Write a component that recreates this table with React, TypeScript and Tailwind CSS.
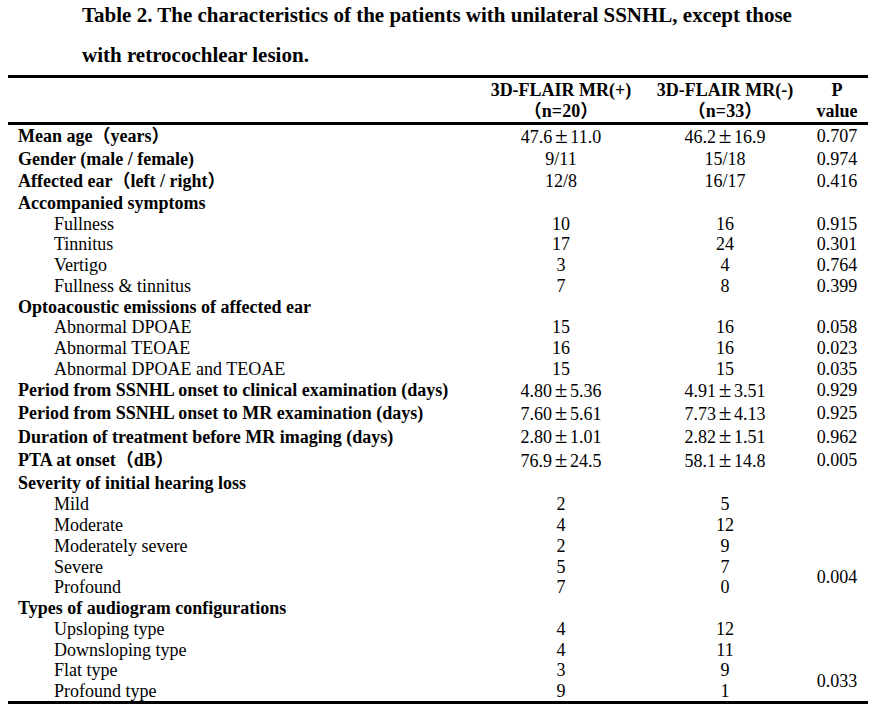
type Row = {
  label: string;
  bold?: boolean;
  a?: string;
  b?: string;
  p?: string;
  span?: number;
  skipP?: boolean;
  h: string;
};

const rows: Row[] = [
  { label: "Mean age（years）", bold: true, a: "47.6±11.0", b: "46.2±16.9", p: "0.707", h: "h-[22px]" },
  { label: "Gender (male / female)", bold: true, a: "9/11", b: "15/18", p: "0.974", h: "h-[23px]" },
  { label: "Affected ear（left / right）", bold: true, a: "12/8", b: "16/17", p: "0.416", h: "h-[22px]" },
  { label: "Accompanied symptoms", bold: true, h: "h-[21px]" },
  { label: "Fullness", a: "10", b: "16", p: "0.915", h: "h-[21px]" },
  { label: "Tinnitus", a: "17", b: "24", p: "0.301", h: "h-[20px]" },
  { label: "Vertigo", a: "3", b: "4", p: "0.764", h: "h-[21px]" },
  { label: "Fullness & tinnitus", a: "7", b: "8", p: "0.399", h: "h-[21px]" },
  { label: "Optoacoustic emissions of affected ear", bold: true, h: "h-[21px]" },
  { label: "Abnormal DPOAE", a: "15", b: "16", p: "0.058", h: "h-[20px]" },
  { label: "Abnormal TEOAE", a: "16", b: "16", p: "0.023", h: "h-[21px]" },
  { label: "Abnormal DPOAE and TEOAE", a: "15", b: "15", p: "0.035", h: "h-[21px]" },
  { label: "Period from SSNHL onset to clinical examination (days)", bold: true, a: "4.80±5.36", b: "4.91±3.51", p: "0.929", h: "h-[22px]" },
  { label: "Period from SSNHL onset to MR examination (days)", bold: true, a: "7.60±5.61", b: "7.73±4.13", p: "0.925", h: "h-[24px]" },
  { label: "Duration of treatment before MR imaging (days)", bold: true, a: "2.80±1.01", b: "2.82±1.51", p: "0.962", h: "h-[23px]" },
  { label: "PTA at onset（dB）", bold: true, a: "76.9±24.5", b: "58.1±14.8", p: "0.005", h: "h-[24px]" },
  { label: "Severity of initial hearing loss", bold: true, h: "h-[22px]" },
  { label: "Mild", a: "2", b: "5", h: "h-[20px]" },
  { label: "Moderate", a: "4", b: "12", h: "h-[21px]" },
  { label: "Moderately severe", a: "2", b: "9", h: "h-[21px]" },
  { label: "Severe", a: "5", b: "7", p: "0.004", span: 2, h: "h-[21px]" },
  { label: "Profound", a: "7", b: "0", skipP: true, h: "h-[20px]" },
  { label: "Types of audiogram configurations", bold: true, h: "h-[21px]" },
  { label: "Upsloping type", a: "4", b: "12", h: "h-[21px]" },
  { label: "Downsloping type", a: "4", b: "11", h: "h-[21px]" },
  { label: "Flat type", a: "3", b: "9", p: "0.033", span: 2, h: "h-[20px]" },
  { label: "Profound type", a: "9", b: "1", skipP: true, h: "h-[21px]" },
];

// the ± in the source is a wide CJK-style glyph
const withPm = (text?: string) => {
  if (!text) return null;
  const parts = text.split("±");
  if (parts.length < 2) return text;
  return (
    <>
      {parts[0]}
      <span className="inline-block w-[18px] text-center text-[23px] leading-[18px]">±</span>
      {parts[1]}
    </>
  );
};

export default function App() {
  return (
    <div className="w-[874px] h-[714px] bg-white text-black font-['Liberation_Serif','Times_New_Roman','Noto_Sans_CJK_SC',serif] overflow-hidden">
      <div className="flow-root h-[75px] pl-[82px]">
        <p className="-mt-[5px] text-[21px] leading-[40px] font-bold whitespace-nowrap">
          Table 2. The characteristics of the patients with unilateral SSNHL, except those
          <br />
          with retrocochlear lesion.
        </p>
      </div>

      <div className="mx-[8px] w-[860px] text-[18px]">
        <div className="h-[3px] bg-black" />
        <div className="flex h-[44px] items-center font-bold leading-[21px] text-center">
          <div className="w-[470px]" />
          <div className="w-[166px] pt-[2px]">
            3D-FLAIR MR(+)
            <br />（n=20）
          </div>
          <div className="w-[162px] pt-[2px]">
            3D-FLAIR MR(-)
            <br />（n=33）
          </div>
          <div className="w-[62px] pt-[2px]">
            P
            <br />
            value
          </div>
        </div>
        <div className="h-[3px] bg-black" />

        <table className="w-[860px] table-fixed">
          <colgroup>
            <col className="w-[470px]" />
            <col className="w-[166px]" />
            <col className="w-[162px]" />
            <col className="w-[62px]" />
          </colgroup>
          <tbody>
            {rows.map((r) => (
              <tr key={r.label} className={`${r.h} leading-none`}>
                <td className={r.bold ? "pl-[10px] font-bold whitespace-nowrap" : "pl-[46px] whitespace-nowrap"}>
                  {r.label}
                </td>
                <td className="text-center">{withPm(r.a)}</td>
                <td className="text-center">{withPm(r.b)}</td>
                {!r.skipP && (
                  <td rowSpan={r.span} className="text-center align-middle">
                    {r.p}
                  </td>
                )}
              </tr>
            ))}
          </tbody>
        </table>
        <div className="h-[3px] bg-black" />
      </div>
    </div>
  );
}
